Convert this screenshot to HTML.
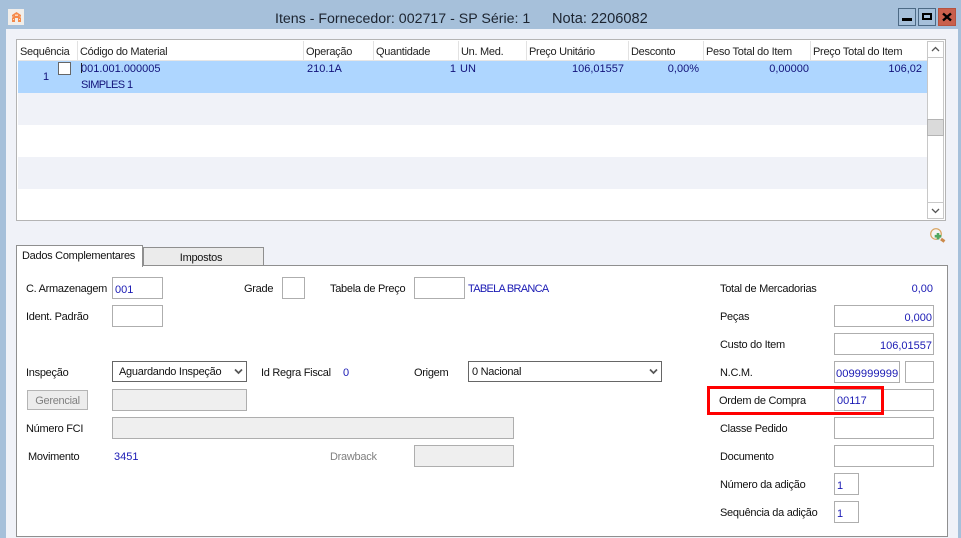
<!DOCTYPE html>
<html lang="pt"><head><meta charset="utf-8"><title>Itens</title>
<style>
html,body{margin:0;padding:0}
body{width:961px;height:538px;overflow:hidden;position:relative;background:#a6c0da;font-family:"Liberation Sans",sans-serif;font-size:11px;letter-spacing:-.28px;color:#111}
div{position:absolute;box-sizing:border-box}
.t{white-space:nowrap;line-height:14px;height:14px;margin-top:1px}
.v{margin-top:0;letter-spacing:0;color:#12127a}
.b{color:#1a1ab4;letter-spacing:0}
.r{text-align:right}
.h{top:41px;height:19px;background:#fff;line-height:23px;padding-left:2px;white-space:nowrap;color:#222}
.i{background:#fff;border:1px solid #aeaeae;height:22px;color:#1a1ab4;line-height:22px;padding:1px 1px 0 2px;white-space:nowrap;letter-spacing:0}
.d{background:#efefef;border:1px solid #aeaeae;height:22px}
.s{background:#fff;border:1px solid #666;height:21px;line-height:21px;padding-left:6px;white-space:nowrap}
.ti{white-space:nowrap;height:18px;line-height:18px;font-size:14.200px;color:#1c2430;letter-spacing:0;top:10px}
</style></head><body>

<!-- title bar -->
<div style="left:8px;top:9px;width:16px;height:16px;background:#f1eeea;"></div>
<svg style="position:absolute;left:12px;top:12px" width="9" height="10" viewBox="0 0 9 10"><path d="M0 3L4.500 0L9 3V5L7 3.500L9 6V10H6V6H3V10H0V6L2 3.500L0 5Z" fill="#f58a4a"/><path d="M3 2.500H6V4H3ZM1 7H2V8H1ZM7 7H8V8H7Z" fill="#fcd8c0"/></svg>
<div class="ti" style="left:275px">Itens - Fornecedor: 002717 - SP Série: 1</div>
<div class="ti" style="left:552px;font-size:14.600px">Nota: 2206082</div>

<div style="left:898px;top:8px;width:18px;height:18px;background:#a6c0da;border:1px solid #4d6a85"></div>
<div style="left:902px;top:18px;width:10px;height:3px;background:#000"></div>
<div style="left:918px;top:8px;width:18px;height:18px;background:#a6c0da;border:1px solid #4d6a85"></div>
<div style="left:922px;top:13px;width:10px;height:7px;border:2px solid #000"></div>
<div style="left:938px;top:8px;width:18px;height:18px;background:#c9604c;border:1px solid #b5523f"></div>
<svg style="position:absolute;left:942px;top:12px" width="10" height="10" viewBox="0 0 10 10"><path d="M1 1.500L9 8.500M9 1.500L1 8.500" stroke="#000" stroke-width="2.400"/></svg>

<!-- client area -->
<div style="left:6px;top:29px;width:952px;height:509px;background:#f0f2f8"></div>

<!-- grid -->
<div style="left:16px;top:39px;width:930px;height:182px;background:#fff;border:1px solid #b4b4b4"></div>
<div style="left:18px;top:61px;width:909px;height:32px;background:#aed6ff"></div>
<div style="left:18px;top:93px;width:909px;height:32px;background:#f0f2f8"></div>
<div style="left:18px;top:157px;width:909px;height:32px;background:#f0f2f8"></div>
<div style="left:18px;top:60px;width:909px;height:1px;background:#e6e6e6"></div>

<div class="h" style="left:18px;width:59px">Sequência</div>
<div class="h" style="left:78px;width:225px">Código do Material</div>
<div class="h" style="left:304px;width:69px">Operação</div>
<div class="h" style="left:374px;width:84px">Quantidade</div>
<div class="h" style="left:459px;width:67px">Un. Med.</div>
<div class="h" style="left:527px;width:101px">Preço Unitário</div>
<div class="h" style="left:629px;width:74px">Desconto</div>
<div class="h" style="left:704px;width:105px">Peso Total do Item</div>
<div class="h" style="left:811px;width:115px">Preço Total do Item</div>
<div style="left:77px;top:41px;width:1px;height:19px;background:#e2e2e2"></div>
<div style="left:303px;top:41px;width:1px;height:19px;background:#e2e2e2"></div>
<div style="left:373px;top:41px;width:1px;height:19px;background:#e2e2e2"></div>
<div style="left:458px;top:41px;width:1px;height:19px;background:#e2e2e2"></div>
<div style="left:526px;top:41px;width:1px;height:19px;background:#e2e2e2"></div>
<div style="left:628px;top:41px;width:1px;height:19px;background:#e2e2e2"></div>
<div style="left:703px;top:41px;width:1px;height:19px;background:#e2e2e2"></div>
<div style="left:810px;top:41px;width:1px;height:19px;background:#e2e2e2"></div>

<div class="t v" style="left:43px;top:70px">1</div>
<div style="left:58px;top:62px;width:13px;height:13px;background:#fff;border:1px solid #666"></div>
<div style="left:81px;top:63px;width:1px;height:10px;background:#222"></div>
<div class="t v" style="left:81px;top:62px">001.001.000005</div>
<div class="t v" style="left:81px;top:78px;letter-spacing:-.6px">SIMPLES 1</div>
<div class="t v" style="left:307px;top:62px">210.1A</div>
<div class="t v r" style="left:400px;width:56px;top:62px">1</div>
<div class="t v" style="left:460px;top:62px">UN</div>
<div class="t v r" style="left:540px;width:84px;top:62px">106,01557</div>
<div class="t v r" style="left:640px;width:59px;top:62px">0,00%</div>
<div class="t v r" style="left:720px;width:89px;top:62px">0,00000</div>
<div class="t v r" style="left:830px;width:92px;top:62px">106,02</div>

<!-- scrollbar -->
<div style="left:927px;top:41px;width:17px;height:178px;background:#fff;border:1px solid #c8c8c8"></div>
<div style="left:927px;top:57px;width:17px;height:1px;background:#c8c8c8"></div>
<div style="left:927px;top:119px;width:17px;height:17px;background:#dadada;border:1px solid #b4b4b4"></div>
<div style="left:927px;top:202px;width:17px;height:1px;background:#c8c8c8"></div>
<svg style="position:absolute;left:931px;top:46px" width="9" height="7" viewBox="0 0 9 7"><path d="M1 5L4.500 1.500L8 5" fill="none" stroke="#555" stroke-width="1.300"/></svg>
<svg style="position:absolute;left:931px;top:207px" width="9" height="7" viewBox="0 0 9 7"><path d="M1 2L4.500 5.500L8 2" fill="none" stroke="#555" stroke-width="1.300"/></svg>

<!-- magnifier -->
<svg style="position:absolute;left:929px;top:227px" width="18" height="18" viewBox="0 0 18 18"><circle cx="7" cy="7" r="5.300" fill="#f4f4f2" stroke="#d9a25e" stroke-width="1.200"/><path d="M12 12L15.500 14.500" stroke="#cc8a4a" stroke-width="3"/><path d="M9 6V12.500M5.700 9.200H12.300" stroke="#4fa860" stroke-width="2.600"/></svg>

<!-- tab panel -->
<div style="left:16px;top:265px;width:932px;height:272px;background:#fff;border:1px solid #8f8f8f"></div>
<div style="left:143px;top:247px;width:121px;height:19px;background:#ebebeb;border:1px solid #8f8f8f"></div>
<div class="t" style="left:143px;top:250px;width:116px;text-align:center">Impostos</div>
<div style="left:16px;top:245px;width:127px;height:22px;background:#fff;border:1px solid #8f8f8f;border-bottom:0"></div>
<div class="t" style="left:22px;top:248px">Dados Complementares</div>

<!-- left form -->
<div class="t" style="left:26px;top:281px">C. Armazenagem</div>
<div class="i" style="left:112px;top:277px;width:51px">001</div>
<div class="t" style="left:244px;top:281px">Grade</div>
<div class="i" style="left:282px;top:277px;width:23px"></div>
<div class="t" style="left:330px;top:281px">Tabela de Preço</div>
<div class="i" style="left:414px;top:277px;width:51px"></div>
<div class="t b" style="left:468px;top:281px;letter-spacing:-.7px">TABELA BRANCA</div>
<div class="t" style="left:26px;top:309px">Ident. Padrão</div>
<div class="i" style="left:112px;top:305px;width:51px"></div>

<div class="t" style="left:26px;top:365px">Inspeção</div>
<div class="s" style="left:112px;top:361px;width:135px">Aguardando Inspeção</div>
<svg style="position:absolute;left:234px;top:368px" width="9" height="7" viewBox="0 0 9 7"><path d="M1 1.500L4.500 5L8 1.500" fill="none" stroke="#555" stroke-width="1.700"/></svg>
<div class="t" style="left:261px;top:365px">Id Regra Fiscal</div>
<div class="t b" style="left:343px;top:365px">0</div>
<div class="t" style="left:414px;top:365px">Origem</div>
<div class="s" style="left:468px;top:361px;width:194px;padding-left:3px">0 Nacional</div>
<svg style="position:absolute;left:649px;top:368px" width="9" height="7" viewBox="0 0 9 7"><path d="M1 1.500L4.500 5L8 1.500" fill="none" stroke="#555" stroke-width="1.700"/></svg>

<div style="left:27px;top:390px;width:61px;height:20px;background:#ececec;border:1px solid #b4b4b4;text-align:center;line-height:20px;color:#808080">Gerencial</div>
<div class="d" style="left:112px;top:389px;width:135px"></div>
<div class="t" style="left:26px;top:421px">Número FCI</div>
<div class="d" style="left:112px;top:417px;width:402px"></div>
<div class="t" style="left:28px;top:449px">Movimento</div>
<div class="t b" style="left:114px;top:449px">3451</div>
<div class="t" style="left:330px;top:449px;color:#808080">Drawback</div>
<div class="d" style="left:414px;top:445px;width:100px"></div>

<!-- right form -->
<div class="t" style="left:720px;top:281px">Total de Mercadorias</div>
<div class="t b r" style="left:860px;width:73px;top:281px">0,00</div>
<div class="t" style="left:720px;top:309px">Peças</div>
<div class="i r" style="left:834px;top:305px;width:100px">0,000</div>
<div class="t" style="left:720px;top:337px">Custo do Item</div>
<div class="i r" style="left:834px;top:333px;width:100px">106,01557</div>
<div class="t" style="left:720px;top:365px">N.C.M.</div>
<div class="i" style="left:834px;top:361px;width:66px;padding-left:1px;font-size:11.200px">0099999999</div>
<div class="i" style="left:905px;top:361px;width:29px"></div>
<div class="t" style="left:719px;top:393px">Ordem de Compra</div>
<div class="i" style="left:834px;top:389px;width:100px;line-height:21px">00117</div>
<div class="t" style="left:720px;top:421px">Classe Pedido</div>
<div class="i" style="left:834px;top:417px;width:100px"></div>
<div class="t" style="left:720px;top:449px">Documento</div>
<div class="i" style="left:834px;top:445px;width:100px"></div>
<div class="t" style="left:720px;top:477px">Número da adição</div>
<div class="i" style="left:834px;top:473px;width:25px">1</div>
<div class="t" style="left:720px;top:505px">Sequência da adição</div>
<div class="i" style="left:834px;top:501px;width:25px">1</div>

<!-- highlight -->
<div style="left:707px;top:386px;width:177px;height:29px;border:3px solid #f00"></div>
</body></html>
